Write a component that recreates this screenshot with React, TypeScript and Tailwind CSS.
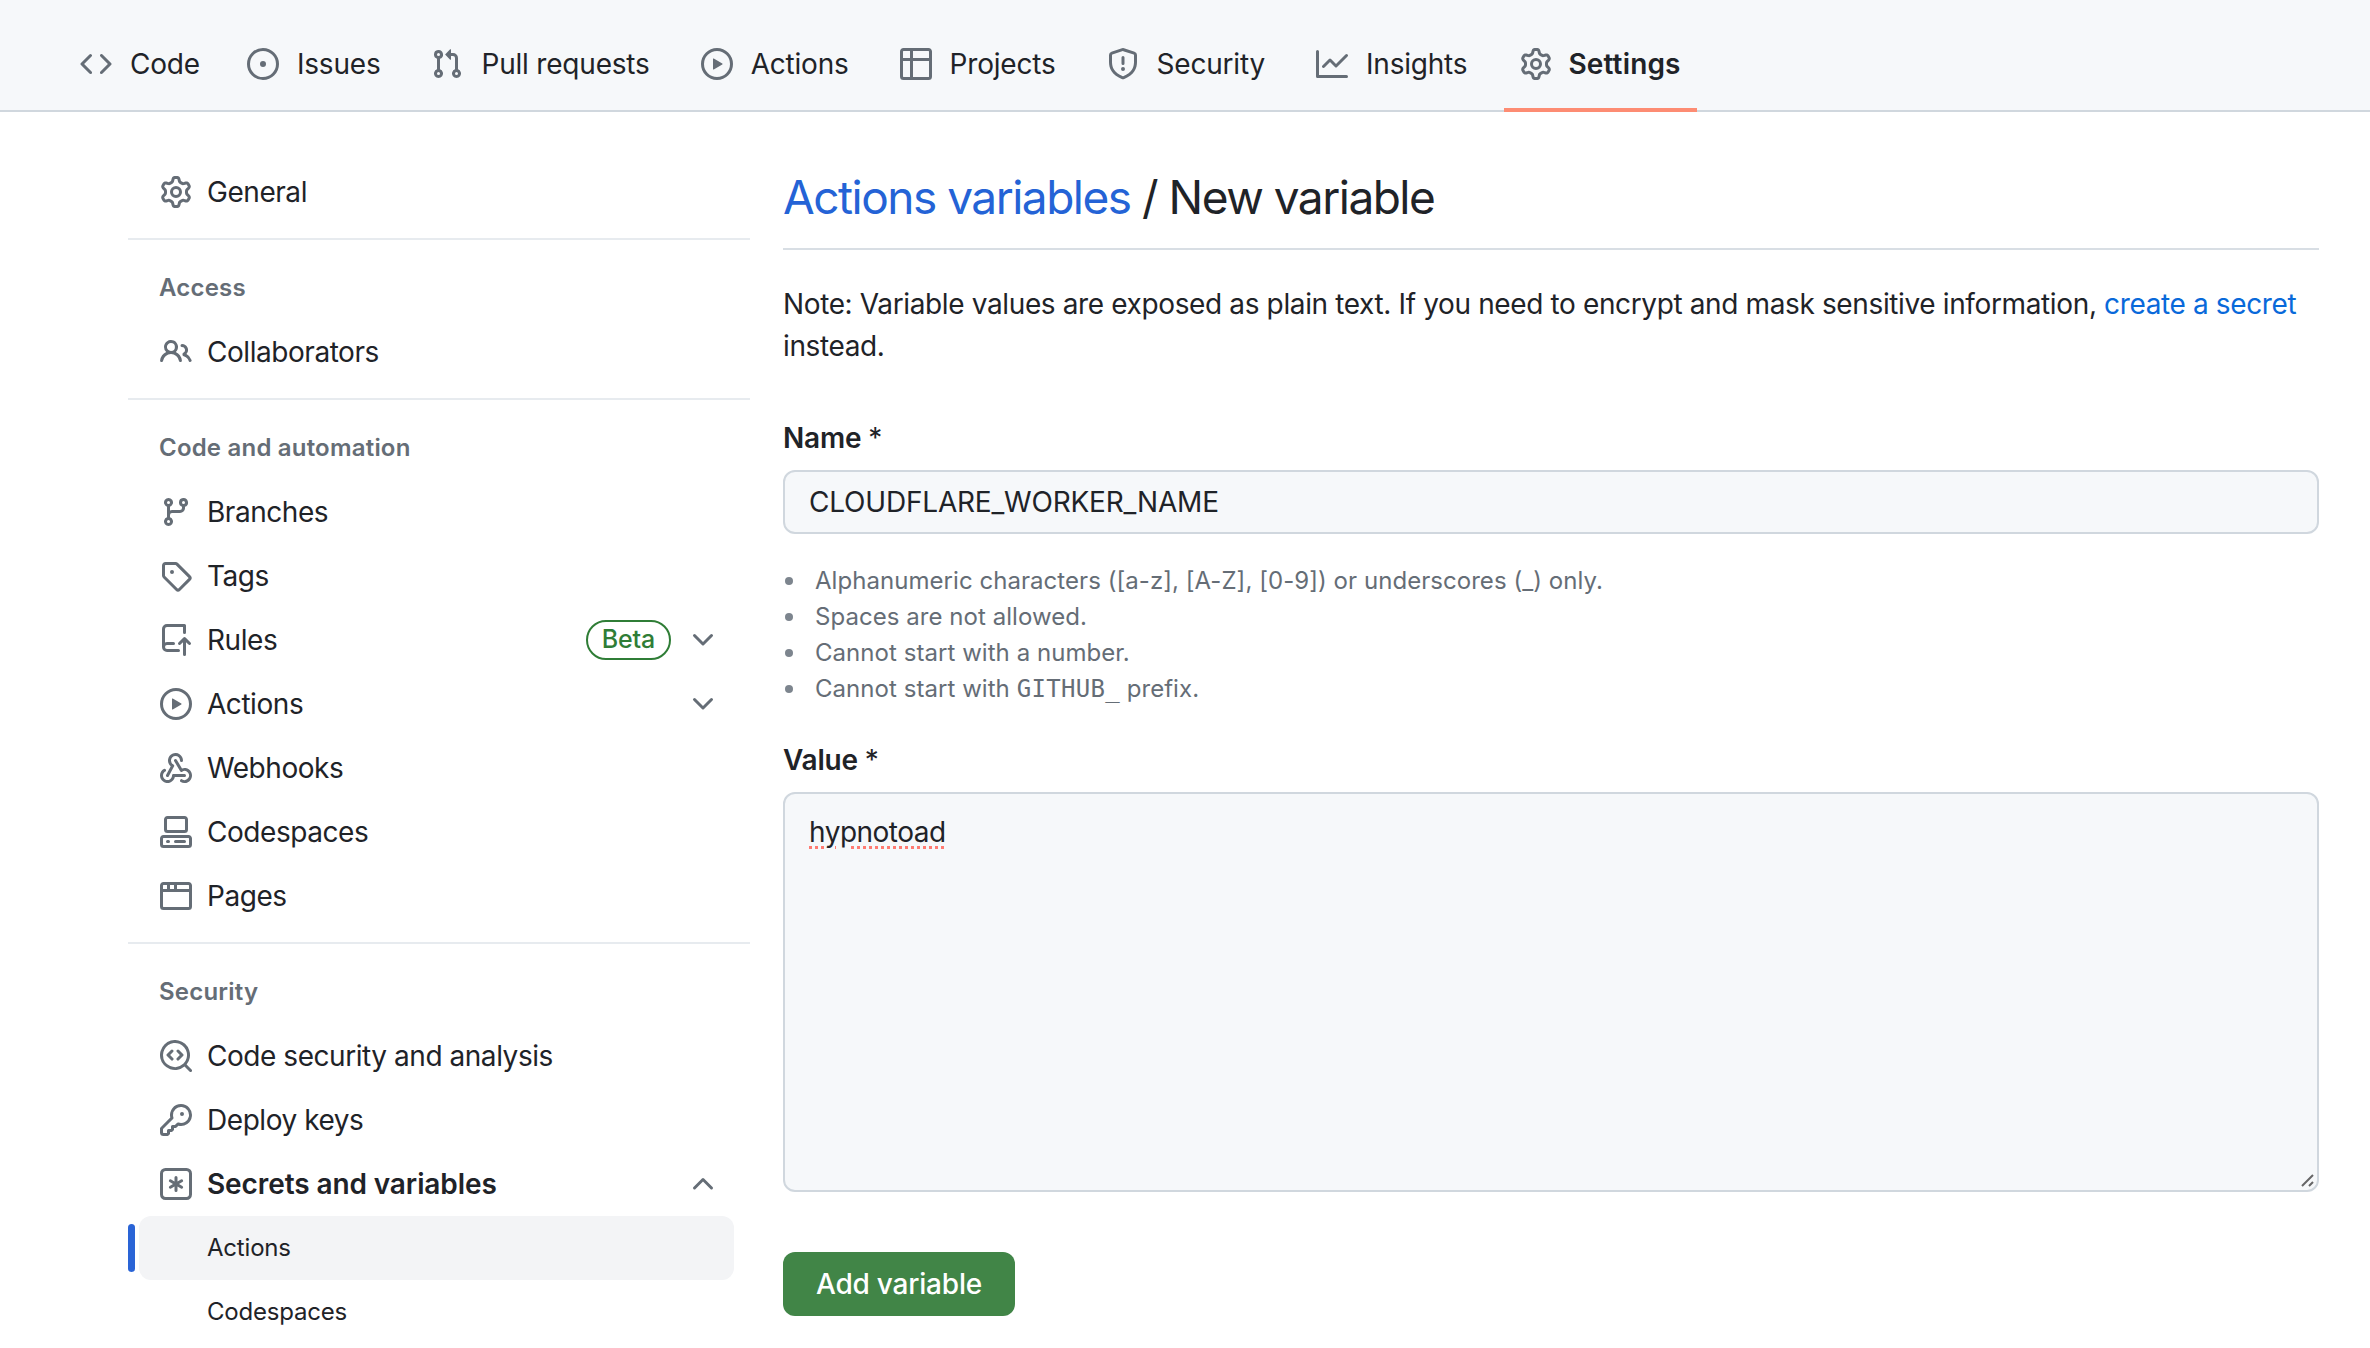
const paths: Record<string, string> = {
  code: "m11.28 3.22 4.25 4.25a.75.75 0 0 1 0 1.06l-4.25 4.25a.749.749 0 0 1-1.275-.326.749.749 0 0 1 .215-.734L13.94 8l-3.72-3.72a.749.749 0 0 1 .326-1.275.749.749 0 0 1 .734.215Zm-6.56 0a.751.751 0 0 1 1.042.018.751.751 0 0 1 .018 1.042L2.06 8l3.72 3.72a.749.749 0 0 1-.326 1.275.749.749 0 0 1-.734-.215L.47 8.53a.75.75 0 0 1 0-1.06Z",
  issue: "M8 9.5a1.5 1.5 0 1 0 0-3 1.5 1.5 0 0 0 0 3Z M8 0a8 8 0 1 1 0 16A8 8 0 0 1 8 0ZM1.5 8a6.5 6.5 0 1 0 13 0 6.5 6.5 0 0 0-13 0Z",
  pull: "M1.5 3.25a2.25 2.25 0 1 1 3 2.122v5.256a2.251 2.251 0 1 1-1.5 0V5.372A2.25 2.25 0 0 1 1.5 3.25Zm5.677-.177L9.573.677A.25.25 0 0 1 10 .854V2.5h1A2.5 2.5 0 0 1 13.5 5v5.628a2.251 2.251 0 1 1-1.5 0V5a1 1 0 0 0-1-1h-1v1.646a.25.25 0 0 1-.427.177L7.177 3.427a.25.25 0 0 1 0-.354ZM3.75 2.5a.75.75 0 1 0 0 1.5.75.75 0 0 0 0-1.5Zm0 9.5a.75.75 0 1 0 0 1.5.75.75 0 0 0 0-1.5Zm8.25.75a.75.75 0 1 0 1.5 0 .75.75 0 0 0-1.5 0Z",
  play: "M8 0a8 8 0 1 1 0 16A8 8 0 0 1 8 0ZM1.5 8a6.5 6.5 0 1 0 13 0 6.5 6.5 0 0 0-13 0Zm4.879-2.773 4.264 2.559a.25.25 0 0 1 0 .428l-4.264 2.559A.25.25 0 0 1 6 10.559V5.442a.25.25 0 0 1 .379-.215Z",
  table: "M0 1.75C0 .784.784 0 1.75 0h12.5C15.216 0 16 .784 16 1.75v12.5A1.75 1.75 0 0 1 14.25 16H1.75A1.75 1.75 0 0 1 0 14.25ZM6.5 6.5v8h7.75a.25.25 0 0 0 .25-.25V6.5Zm8-1.5V1.75a.25.25 0 0 0-.25-.25H6.5V5Zm-13 1.5v7.75c0 .138.112.25.25.25H5v-8ZM5 5V1.5H1.75a.25.25 0 0 0-.25.25V5Z",
  shield: "M7.467.133a1.748 1.748 0 0 1 1.066 0l5.25 1.68A1.75 1.75 0 0 1 15 3.48V7c0 1.566-.32 3.182-1.303 4.682-.983 1.498-2.585 2.813-5.032 3.855a1.697 1.697 0 0 1-1.33 0c-2.447-1.042-4.049-2.357-5.032-3.855C1.32 10.182 1 8.566 1 7V3.48a1.75 1.75 0 0 1 1.217-1.667Zm.61 1.429a.25.25 0 0 0-.153 0l-5.25 1.68a.25.25 0 0 0-.174.238V7c0 1.358.275 2.666 1.057 3.86.784 1.194 2.121 2.34 4.366 3.297a.196.196 0 0 0 .154 0c2.245-.956 3.582-2.104 4.366-3.298C13.225 9.666 13.5 8.36 13.5 7V3.48a.251.251 0 0 0-.174-.237l-5.25-1.68ZM8.75 4.75v3a.75.75 0 0 1-1.5 0v-3a.75.75 0 0 1 1.5 0ZM9 10.5a1 1 0 1 1-2 0 1 1 0 0 1 2 0Z",
  graph: "M1.5 1.75V13.5h13.75a.75.75 0 0 1 0 1.5H.75a.75.75 0 0 1-.75-.75V1.75a.75.75 0 0 1 1.5 0Zm14.28 2.53-5.25 5.25a.75.75 0 0 1-1.06 0L7 7.06 4.28 9.78a.751.751 0 0 1-1.042-.018.751.751 0 0 1-.018-1.042l3.25-3.25a.75.75 0 0 1 1.06 0L10 7.94l4.72-4.72a.751.751 0 0 1 1.042.018.751.751 0 0 1 .018 1.042Z",
  gear: "M8 0a8.2 8.2 0 0 1 .701.031C9.444.095 9.99.645 10.16 1.29l.288 1.107c.018.066.079.158.212.224.231.114.454.243.668.386.123.082.233.09.299.071l1.103-.303c.644-.176 1.392.021 1.82.63.27.385.506.792.704 1.218.315.675.111 1.422-.364 1.891l-.814.806c-.049.048-.098.147-.088.294.016.257.016.515 0 .772-.01.147.038.246.088.294l.814.806c.475.469.679 1.216.364 1.891a7.977 7.977 0 0 1-.704 1.217c-.428.61-1.176.807-1.82.63l-1.102-.302c-.067-.019-.177-.011-.3.071a5.909 5.909 0 0 1-.668.386c-.133.066-.194.158-.211.224l-.29 1.106c-.168.646-.715 1.196-1.458 1.26a8.006 8.006 0 0 1-1.402 0c-.743-.064-1.289-.614-1.458-1.26l-.289-1.106c-.018-.066-.079-.158-.212-.224a5.738 5.738 0 0 1-.668-.386c-.123-.082-.233-.09-.299-.071l-1.103.303c-.644.176-1.392-.021-1.82-.63a8.12 8.12 0 0 1-.704-1.218c-.315-.675-.111-1.422.363-1.891l.815-.806c.05-.048.098-.147.088-.294a6.214 6.214 0 0 1 0-.772c.01-.147-.038-.246-.088-.294l-.815-.806C.635 6.045.431 5.298.746 4.623a7.92 7.92 0 0 1 .704-1.217c.428-.61 1.176-.807 1.82-.63l1.102.302c.067.019.177.011.3-.071.214-.143.437-.272.668-.386.133-.066.194-.158.211-.224l.29-1.106C6.009.645 6.556.095 7.299.03 7.53.01 7.764 0 8 0Zm-.571 1.525c-.036.003-.108.036-.137.146l-.289 1.105c-.147.561-.549.967-.998 1.189-.173.086-.34.183-.5.29-.417.278-.97.423-1.529.27l-1.103-.303c-.109-.03-.175.016-.195.045-.22.312-.412.644-.573.99-.014.031-.021.11.059.19l.815.806c.411.406.562.957.53 1.456a4.709 4.709 0 0 0 0 .582c.032.499-.119 1.05-.53 1.456l-.815.806c-.081.08-.073.159-.059.19.162.346.353.677.573.989.02.03.085.076.195.046l1.102-.303c.56-.153 1.113-.008 1.53.27.161.107.328.204.501.29.447.222.85.629.997 1.189l.289 1.105c.029.109.101.143.137.146a6.6 6.6 0 0 0 1.142 0c.036-.003.108-.036.137-.146l.289-1.105c.147-.561.549-.967.998-1.189.173-.086.34-.183.5-.29.417-.278.97-.423 1.529-.27l1.103.303c.109.029.175-.016.195-.045.22-.313.411-.644.573-.99.014-.031.021-.11-.059-.19l-.815-.806c-.411-.406-.562-.957-.53-1.456a4.709 4.709 0 0 0 0-.582c-.032-.499.119-1.05.53-1.456l.815-.806c.081-.08.073-.159.059-.19a6.464 6.464 0 0 0-.573-.989c-.02-.03-.085-.076-.195-.046l-1.102.303c-.56.153-1.113.008-1.53-.27a4.44 4.44 0 0 0-.501-.29c-.447-.222-.85-.629-.997-1.189l-.289-1.105c-.029-.11-.101-.143-.137-.146a6.6 6.6 0 0 0-1.142 0ZM11 8a3 3 0 1 1-6 0 3 3 0 0 1 6 0ZM9.5 8a1.5 1.5 0 1 0-3.001.001A1.5 1.5 0 0 0 9.5 8Z",
  people: "M2 5.5a3.5 3.5 0 1 1 5.898 2.549 5.508 5.508 0 0 1 3.034 4.084.75.75 0 1 1-1.482.235 4 4 0 0 0-7.9 0 .75.75 0 0 1-1.482-.236A5.507 5.507 0 0 1 3.102 8.05 3.493 3.493 0 0 1 2 5.5ZM11 4a3.001 3.001 0 0 1 2.22 5.018 5.01 5.01 0 0 1 2.56 3.012.749.749 0 0 1-.885.954.752.752 0 0 1-.549-.514 3.507 3.507 0 0 0-2.522-2.372.75.75 0 0 1-.574-.73v-.352a.75.75 0 0 1 .416-.672A1.5 1.5 0 0 0 11 5.5.75.75 0 0 1 11 4Zm-5.5-.5a2 2 0 1 0-.001 3.999A2 2 0 0 0 5.5 3.5Z",
  branch: "M9.5 3.25a2.25 2.25 0 1 1 3 2.122V6A2.5 2.5 0 0 1 10 8.5H6a1 1 0 0 0-1 1v1.128a2.251 2.251 0 1 1-1.5 0V5.372a2.25 2.25 0 1 1 1.5 0v1.836A2.493 2.493 0 0 1 6 7h4a1 1 0 0 0 1-1v-.628A2.25 2.25 0 0 1 9.5 3.25Zm-6 0a.75.75 0 1 0 1.5 0 .75.75 0 0 0-1.5 0Zm8.25-.75a.75.75 0 1 0 0 1.5.75.75 0 0 0 0-1.5ZM4.25 12a.75.75 0 1 0 0 1.5.75.75 0 0 0 0-1.5Z",
  tag: "M1 7.775V2.75C1 1.784 1.784 1 2.75 1h5.025c.464 0 .91.184 1.238.513l6.25 6.25a1.75 1.75 0 0 1 0 2.474l-5.026 5.026a1.75 1.75 0 0 1-2.474 0l-6.25-6.25A1.752 1.752 0 0 1 1 7.775Zm1.5 0c0 .066.026.13.073.177l6.25 6.25a.25.25 0 0 0 .354 0l5.025-5.025a.25.25 0 0 0 0-.354l-6.25-6.25a.25.25 0 0 0-.177-.073H2.75a.25.25 0 0 0-.25.25ZM6 5a1 1 0 1 1 0 2 1 1 0 0 1 0-2Z",
  rules: "M1 2.5A2.5 2.5 0 0 1 3.5 0h8.75a.75.75 0 0 1 .75.75v3.5a.75.75 0 0 1-1.5 0V1.5h-8a1 1 0 0 0-1 1v6.708A2.492 2.492 0 0 1 3.5 9h3.25a.75.75 0 0 1 0 1.5H3.5a1 1 0 0 0 0 2h5.75a.75.75 0 0 1 0 1.5H3.5A2.5 2.5 0 0 1 1 11.5Zm13.23 7.79h-.001l-1.224-1.224v6.184a.75.75 0 0 1-1.5 0V9.066L10.28 10.29a.75.75 0 0 1-1.06-1.061l2.505-2.504a.75.75 0 0 1 1.06 0L15.29 9.23a.751.751 0 0 1-.018 1.042.751.751 0 0 1-1.042.018Z",
  webhook: "M5.5 4.25a2.25 2.25 0 0 1 4.5 0 .75.75 0 0 0 1.5 0 3.75 3.75 0 1 0-6.14 2.889l-2.272 4.258a.75.75 0 0 0 1.324.706L7 7.25a.75.75 0 0 0-.309-1.015A2.25 2.25 0 0 1 5.5 4.25Z M7.364 3.607a.75.75 0 0 1 1.03.257l2.608 4.349a3.75 3.75 0 1 1-.628 6.785.75.75 0 0 1 .752-1.299 2.25 2.25 0 1 0-.033-3.88.75.75 0 0 1-1.03-.256L7.107 4.636a.75.75 0 0 1 .257-1.03Z M2.9 8.776A.75.75 0 0 1 2.625 9.8 2.25 2.25 0 1 0 6 11.75a.75.75 0 0 1 .75-.751h5.5a.75.75 0 0 1 0 1.5H7.425a3.751 3.751 0 1 1-5.55-3.998.75.75 0 0 1 1.024.274Z",
  codespaces: "M0 11.25c0-.966.784-1.75 1.75-1.75h12.5c.966 0 1.75.784 1.75 1.75v3A1.75 1.75 0 0 1 14.25 16H1.75A1.75 1.75 0 0 1 0 14.25Zm2-9.5C2 .784 2.784 0 3.75 0h8.5C13.216 0 14 .784 14 1.75v5a1.75 1.75 0 0 1-1.75 1.75h-8.5A1.75 1.75 0 0 1 2 6.75Zm1.75-.25a.25.25 0 0 0-.25.25v5c0 .138.112.25.25.25h8.5a.25.25 0 0 0 .25-.25v-5a.25.25 0 0 0-.25-.25Zm-2 9.5a.25.25 0 0 0-.25.25v3c0 .138.112.25.25.25h12.5a.25.25 0 0 0 .25-.25v-3a.25.25 0 0 0-.25-.25Z M7 12.75a.75.75 0 0 1 .75-.75h4.5a.75.75 0 0 1 0 1.5h-4.5a.75.75 0 0 1-.75-.75Zm-4 0a.75.75 0 0 1 .75-.75h.5a.75.75 0 0 1 0 1.5h-.5a.75.75 0 0 1-.75-.75Z",
  browser: "M0 2.75C0 1.784.784 1 1.75 1h12.5c.966 0 1.75.784 1.75 1.75v10.5A1.75 1.75 0 0 1 14.25 15H1.75A1.75 1.75 0 0 1 0 13.25ZM14.5 6h-13v7.25c0 .138.112.25.25.25h12.5a.25.25 0 0 0 .25-.25Zm-6-3.5v2h6V2.75a.25.25 0 0 0-.25-.25ZM5 2.5v2h2v-2Zm-3.25 0a.25.25 0 0 0-.25.25V4.5h2v-2Z",
  codescan: "M8.47 4.97a.75.75 0 0 0 0 1.06L9.94 7.5 8.47 8.97a.75.75 0 1 0 1.06 1.06l2-2a.75.75 0 0 0 0-1.06l-2-2a.75.75 0 0 0-1.06 0ZM6.53 6.03a.75.75 0 0 0-1.06-1.06l-2 2a.75.75 0 0 0 0 1.06l2 2a.75.75 0 1 0 1.06-1.06L5.06 7.5l1.47-1.47Z M12.246 13.307a7.501 7.501 0 1 1 1.06-1.06l2.474 2.473a.749.749 0 0 1-.326 1.275.749.749 0 0 1-.734-.215ZM1.5 7.5a6.002 6.002 0 0 0 3.608 5.504 6.002 6.002 0 0 0 6.486-1.117.748.748 0 0 1 .292-.293A6 6 0 1 0 1.5 7.5Z",
  key: "M10.5 0a5.499 5.499 0 1 1-1.288 10.848l-.932.932a.749.749 0 0 1-.53.22H7v.75a.749.749 0 0 1-.22.53l-.5.5a.749.749 0 0 1-.53.22H5v.75a.749.749 0 0 1-.22.53l-.5.5a.749.749 0 0 1-.53.22h-2A1.75 1.75 0 0 1 0 14.25v-2c0-.199.079-.389.22-.53l4.932-4.932A5.5 5.5 0 0 1 10.5 0Zm-4 5.5c-.001.431.069.86.205 1.269a.75.75 0 0 1-.181.768L1.5 12.56v1.69c0 .138.112.25.25.25h1.69l.06-.06v-1.19a.75.75 0 0 1 .75-.75h1.19l.06-.06v-1.19a.75.75 0 0 1 .75-.75h1.19l1.023-1.025a.75.75 0 0 1 .768-.18A4 4 0 1 0 6.5 5.5ZM11 6a1 1 0 1 1 0-2 1 1 0 0 1 0 2Z",
  asterisk: "M0 2.75A2.75 2.75 0 0 1 2.75 0h10.5A2.75 2.75 0 0 1 16 2.75v10.5A2.75 2.75 0 0 1 13.25 16H2.75A2.75 2.75 0 0 1 0 13.25ZM2.75 1.5c-.69 0-1.25.56-1.25 1.25v10.5c0 .69.56 1.25 1.25 1.25h10.5c.69 0 1.25-.56 1.25-1.25V2.75c0-.69-.56-1.25-1.25-1.25Z M8 4a.75.75 0 0 1 .75.75V6.7l1.69-.975a.75.75 0 0 1 .75 1.3L9.5 8l1.69.975a.75.75 0 0 1-.75 1.3L8.75 9.3v1.95a.75.75 0 0 1-1.5 0V9.3l-1.69.975a.751.751 0 0 1-1.025-.275.75.75 0 0 1 .275-1.025L6.5 8l-1.69-.975a.75.75 0 0 1 .75-1.3L7.25 6.7V4.75A.75.75 0 0 1 8 4Z",
  chevronDown: "M12.78 5.22a.749.749 0 0 1 0 1.06l-4.25 4.25a.749.749 0 0 1-1.06 0L3.22 6.28a.749.749 0 1 1 1.06-1.06L8 8.939l3.72-3.719a.749.749 0 0 1 1.06 0Z",
  chevronUp: "M3.22 10.53a.749.749 0 0 1 0-1.06l4.25-4.25a.749.749 0 0 1 1.06 0l4.25 4.25a.749.749 0 1 1-1.06 1.06L8 6.811 4.28 10.53a.749.749 0 0 1-1.06 0Z",
};

const Icon = ({ name }: { name: string }) => (
  <svg width="32" height="32" viewBox="0 0 16 16" fill="#656d76" className="shrink-0">
    <path d={paths[name]} />
  </svg>
);

const tabs = [
  { label: "Code", icon: "code", cls: "-mr-[4px] gap-[18px] border-transparent" },
  { label: "Issues", icon: "issue", cls: "gap-[18px] border-transparent" },
  { label: "Pull requests", icon: "pull", cls: "gap-[18px] border-transparent" },
  { label: "Actions", icon: "play", cls: "gap-[18px] border-transparent" },
  { label: "Projects", icon: "table", cls: "gap-[18px] border-transparent" },
  { label: "Security", icon: "shield", cls: "gap-[18px] border-transparent" },
  { label: "Insights", icon: "graph", cls: "gap-[18px] border-transparent" },
  { label: "Settings", icon: "gear", cls: "ml-[2px] gap-[16px] border-[#fd8c73] font-semibold tracking-[0.15px]" },
];

const SideItem = ({ icon, label, bold, children }: any) => (
  <div className="flex items-center h-[64px] pl-[32px] pr-[31px] shrink-0">
    <Icon name={icon} />
    <span className={`ml-[15px] text-[28px] ${bold ? "font-semibold tracking-[-0.1px]" : "tracking-[-0.45px]"}`}>
      {label}
    </span>
    <div className="ml-auto flex items-center gap-[16px]">{children}</div>
  </div>
);

const SectionTitle = ({ title }: { title: string }) => (
  <div className="h-[48px] mt-[24px] mb-[8px] pl-[31px] flex items-center text-[24px] font-semibold text-[#656d76] tracking-[0.2px]">
    {title}
  </div>
);

const Divider = () => <div className="h-[2px] bg-[#e7ebef] mt-[14px]" />;

const hints = [
  "Alphanumeric characters ([a-z], [A-Z], [0-9]) or underscores (_) only.",
  "Spaces are not allowed.",
  "Cannot start with a number.",
];

const Hint = ({ children }: { children: React.ReactNode }) => (
  <li className="flex items-center h-[36px]">
    <span className="w-[8px] h-[8px] rounded-full bg-[#7d858e] ml-[2px] mr-[22px] shrink-0" />
    <span>{children}</span>
  </li>
);

const App = () => {
  return (
    <div className="w-[2370px] h-[1348px] overflow-hidden bg-white text-[#1f2328] font-['Inter',sans-serif] tracking-[-0.2px]">
      {/* tabs */}
      <div className="h-[112px] bg-[#f6f8fa] border-b-2 border-[#d0d7de] flex items-end pl-[64px] gap-[19px]">
        {tabs.map((t) => (
          <div
            key={t.label}
            className={`flex items-center px-[16px] pt-[19px] h-[112px] -mb-[2px] border-b-[4px] ${t.cls}`}
          >
            <Icon name={t.icon} />
            <span className="text-[28px]">{t.label}</span>
          </div>
        ))}
      </div>

      <div className="flex pl-[128px] pr-[51px] gap-[33px]">
        {/* sidebar */}
        <div className="w-[622px] shrink-0 pt-[48px] flex flex-col">
          <SideItem icon="gear" label="General" />
          <Divider />
          <SectionTitle title="Access" />
          <SideItem icon="people" label="Collaborators" />
          <Divider />
          <SectionTitle title="Code and automation" />
          <SideItem icon="branch" label="Branches" />
          <SideItem icon="tag" label="Tags" />
          <SideItem icon="rules" label="Rules">
            <span className="h-[40px] px-[14px] rounded-full border-2 border-[#2f7d36] text-[#2f7d36] text-[25px] font-medium flex items-center">
              Beta
            </span>
            <Icon name="chevronDown" />
          </SideItem>
          <SideItem icon="play" label="Actions">
            <Icon name="chevronDown" />
          </SideItem>
          <SideItem icon="webhook" label="Webhooks" />
          <SideItem icon="codespaces" label="Codespaces" />
          <SideItem icon="browser" label="Pages" />
          <Divider />
          <SectionTitle title="Security" />
          <SideItem icon="codescan" label="Code security and analysis" />
          <SideItem icon="key" label="Deploy keys" />
          <SideItem icon="asterisk" label="Secrets and variables" bold>
            <Icon name="chevronUp" />
          </SideItem>
          <div className="flex items-center h-[64px] shrink-0">
            <div className="w-[7px] h-[48px] rounded-full bg-[#2a64d6] mr-[4px]" />
            <div className="w-[595px] h-[64px] rounded-[12px] bg-[#f3f4f6] flex items-center pl-[68px] text-[24px]">
              Actions
            </div>
          </div>
          <div className="flex items-center h-[64px] shrink-0 pl-[79px] text-[24px]">Codespaces</div>
        </div>

        {/* main */}
        <div className="flex-1 pt-[49px] min-w-0">
          <h1 className="text-[46px] leading-[72px] h-[89px] border-b-2 border-[#d8dee4] tracking-[-1.5px]">
            <a className="text-[#2463d6]">Actions variables</a> / New variable
          </h1>
          <p className="mt-[33px] text-[28px] leading-[42px] tracking-[-0.37px]">
            Note: Variable values are exposed as plain text. If you need to encrypt and mask sensitive information,{" "}
            <a className="text-[#0969da]">create a secret</a> instead.
          </p>
          <div className="mt-[50px] text-[28px] leading-[42px] font-semibold">
            Name <span className="font-normal">*</span>
          </div>
          <input
            readOnly
            value="CLOUDFLARE_WORKER_NAME"
            className="mt-[11px] block w-full h-[64px] px-[24px] bg-[#f6f8fa] border-2 border-[#d0d7de] rounded-[12px] text-[28px] outline-none"
          />
          <ul className="mt-[29px] text-[24px] text-[#656d76] tracking-[0.05px]">
            {hints.map((h) => (
              <Hint key={h}>{h}</Hint>
            ))}
            <Hint>
              Cannot start with{" "}
              <code className="font-['DejaVu_Sans_Mono',monospace] text-[24px] tracking-[0.3px]">GITHUB_</code> prefix.
            </Hint>
          </ul>
          <div className="mt-[32px] text-[28px] leading-[42px] font-semibold">
            Value <span className="font-normal">*</span>
          </div>
          <div className="relative mt-[11px] h-[400px] px-[24px] py-[17px] bg-[#f6f8fa] border-2 border-[#d0d7de] rounded-[12px] text-[28px] leading-[42px]">
            <span className="tracking-[-0.5px] underline decoration-dotted decoration-[3px] decoration-[#ff7b72] underline-offset-[4px]">
              hypnotoad
            </span>
            <svg width="16" height="16" viewBox="0 0 16 16" className="absolute right-[1px] bottom-[1px]">
              <path d="M2 13 L13 2 M9 13 L13 9" stroke="#666" strokeWidth="2" />
            </svg>
          </div>
          <button className="mt-[60px] w-[232px] h-[64px] rounded-[12px] bg-[#418547] text-white text-[28px] font-medium">
            Add variable
          </button>
        </div>
      </div>
    </div>
  );
};

export default App;
